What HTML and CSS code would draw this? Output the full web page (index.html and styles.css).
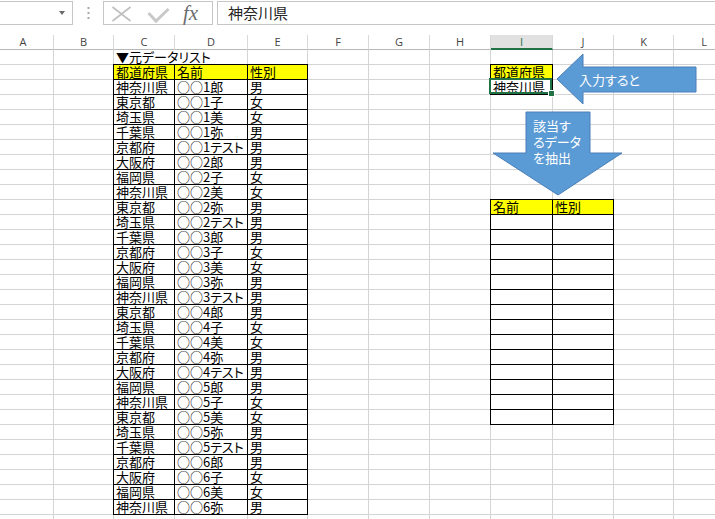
FILE: index.html
```html
<!DOCTYPE html>
<html lang="ja">
<head>
<meta charset="utf-8">
<title>元データリスト</title>
<link rel="stylesheet" href="styles.css">
</head>
<body>
<header class="fbar">
  <div class="namebox"><span class="caret"></span></div>
  <div class="grip">
    <svg width="3" height="12" viewBox="0 0 3 12"><rect x="0.5" y="0" width="2" height="2" fill="#a8a8a8"/><rect x="0.5" y="5" width="2" height="2" fill="#a8a8a8"/><rect x="0.5" y="10" width="2" height="2" fill="#a8a8a8"/></svg>
  </div>
  <div class="fbtns">
    <svg class="ico-x" width="21" height="22" viewBox="0 0 21 22"><path d="M1.5 5 L19.5 19 M19.5 5 L1.5 19" stroke="#bfbfbf" stroke-width="1.6" fill="none"/></svg>
    <svg class="ico-ok" width="23" height="22" viewBox="0 0 23 22"><path d="M1.5 11 L9 19 L21.5 7" stroke="#c9c9c9" stroke-width="3" fill="none"/></svg>
    <span class="fx">fx</span>
  </div>
  <div class="finput">神奈川県</div>
</header>

<nav class="colhead">
  <span>A</span><span>B</span><span>C</span><span>D</span><span>E</span><span>F</span><span>G</span><span>H</span><span class="on">I</span><span>J</span><span>K</span><span>L</span>
</nav>

<main class="sheet">
  <div class="title">▼元データリスト</div>
  <div class="list">
    <span class="hd">都道府県</span><span class="hd">名前</span><span class="hd">性別</span>
    <span>神奈川県</span><span>○○1郎</span><span>男</span>
    <span>東京都</span><span>○○1子</span><span>女</span>
    <span>埼玉県</span><span>○○1美</span><span>女</span>
    <span>千葉県</span><span>○○1弥</span><span>男</span>
    <span>京都府</span><span>○○1テスト</span><span>男</span>
    <span>大阪府</span><span>○○2郎</span><span>男</span>
    <span>福岡県</span><span>○○2子</span><span>女</span>
    <span>神奈川県</span><span>○○2美</span><span>女</span>
    <span>東京都</span><span>○○2弥</span><span>男</span>
    <span>埼玉県</span><span>○○2テスト</span><span>男</span>
    <span>千葉県</span><span>○○3郎</span><span>男</span>
    <span>京都府</span><span>○○3子</span><span>女</span>
    <span>大阪府</span><span>○○3美</span><span>女</span>
    <span>福岡県</span><span>○○3弥</span><span>男</span>
    <span>神奈川県</span><span>○○3テスト</span><span>男</span>
    <span>東京都</span><span>○○4郎</span><span>男</span>
    <span>埼玉県</span><span>○○4子</span><span>女</span>
    <span>千葉県</span><span>○○4美</span><span>女</span>
    <span>京都府</span><span>○○4弥</span><span>男</span>
    <span>大阪府</span><span>○○4テスト</span><span>男</span>
    <span>福岡県</span><span>○○5郎</span><span>男</span>
    <span>神奈川県</span><span>○○5子</span><span>女</span>
    <span>東京都</span><span>○○5美</span><span>女</span>
    <span>埼玉県</span><span>○○5弥</span><span>男</span>
    <span>千葉県</span><span>○○5テスト</span><span>男</span>
    <span>京都府</span><span>○○6郎</span><span>男</span>
    <span>大阪府</span><span>○○6子</span><span>女</span>
    <span>福岡県</span><span>○○6美</span><span>女</span>
    <span>神奈川県</span><span>○○6弥</span><span>男</span>
  </div>

  <div class="key">
    <span class="hd">都道府県</span>
    <span class="sel">神奈川県</span>
  </div>

  <div class="result">
    <span class="hd">名前</span><span class="hd">性別</span>
    <span></span><span></span>
    <span></span><span></span>
    <span></span><span></span>
    <span></span><span></span>
    <span></span><span></span>
    <span></span><span></span>
    <span></span><span></span>
    <span></span><span></span>
    <span></span><span></span>
    <span></span><span></span>
    <span></span><span></span>
    <span></span><span></span>
    <span></span><span></span>
    <span></span><span></span>
  </div>
</main>

<svg class="shapes" width="715" height="519" viewBox="0 0 715 519">
  <polygon class="arrow" points="557,79 583,54 583,67 696,67 696,92 583,92 583,104"/>
  <polygon class="arrow" points="526,112 590,112 590,153 622,153 558,195 493,153 526,153"/>
  <text class="atext" x="579" y="79">入力すると</text>
  <text class="atext" x="533" y="125">該当す</text>
  <text class="atext" x="533" y="141">るデータ</text>
  <text class="atext" x="533" y="157">を抽出</text>
</svg>
</body>
</html>
```
FILE: styles.css
```css
* { box-sizing: border-box; }
html, body { margin: 0; padding: 0; }
body {
  width: 715px;
  height: 519px;
  overflow: hidden;
  background: #fff;
  color: #000;
  font-family: "Noto Sans CJK JP", "Noto Sans", sans-serif;
}

/* formula bar */
.fbar {
  display: flex;
  height: 24px;
  margin-top: 1px;
}
.namebox {
  width: 73px;
  border: 1px solid #c6c6c6;
  border-left: 0;
  display: flex;
  align-items: center;
  justify-content: flex-end;
  padding-right: 7px;
}
.caret {
  width: 0;
  height: 0;
  border-left: 3.5px solid transparent;
  border-right: 3.5px solid transparent;
  border-top: 4px solid #6a6a6a;
}
.grip {
  width: 30px;
  display: flex;
  align-items: center;
  justify-content: center;
}
.fbtns {
  width: 110px;
  border: 1px solid #c6c6c6;
  display: flex;
  align-items: center;
}
.ico-x { margin-left: 7px; }
.ico-ok { margin-left: 15px; }
.fx {
  margin-left: 13px;
  font-family: "Liberation Serif", serif;
  font-style: italic;
  font-size: 21px;
  line-height: 22px;
  color: #6d6d6d;
}
.finput {
  flex: 1;
  margin-left: 4px;
  border: 1px solid #c6c6c6;
  border-right: 0;
  padding-left: 10px;
  font-size: 15px;
  line-height: 21px;
  color: #262626;
}

/* column headers */
.colhead {
  display: grid;
  grid-template-columns: 61px 60px 61px 73px 60px 61px 61px 61px 62px 61px 60px 61px;
  height: 14px;
  margin: 10px 0 0 -7px;
}
.colhead span {
  border-right: 1px solid #d9d9d9;
  border-bottom: 1px solid #b8b8b8;
  font-family: "Open Sans", "Liberation Sans", sans-serif;
  font-size: 11px;
  line-height: 13px;
  color: #444;
  text-align: center;
}
.colhead .on {
  background: #e1e1e1;
  border-bottom: 2px solid #217346;
  color: #217346;
}

/* sheet */
.sheet {
  display: grid;
  grid-template-columns: 61px 60px 61px 73px 60px 61px 61px 61px 62px 61px 60px 61px;
  grid-template-rows: repeat(32, 15px);
  margin: 1px 0 0 -7px;
  background:
    linear-gradient(#d4d4d4, #d4d4d4) 60px 0 / 1px 100% no-repeat,
    linear-gradient(#d4d4d4, #d4d4d4) 120px 0 / 1px 100% no-repeat,
    linear-gradient(#d4d4d4, #d4d4d4) 181px 0 / 1px 100% no-repeat,
    linear-gradient(#d4d4d4, #d4d4d4) 254px 0 / 1px 100% no-repeat,
    linear-gradient(#d4d4d4, #d4d4d4) 314px 0 / 1px 100% no-repeat,
    linear-gradient(#d4d4d4, #d4d4d4) 375px 0 / 1px 100% no-repeat,
    linear-gradient(#d4d4d4, #d4d4d4) 436px 0 / 1px 100% no-repeat,
    linear-gradient(#d4d4d4, #d4d4d4) 497px 0 / 1px 100% no-repeat,
    linear-gradient(#d4d4d4, #d4d4d4) 559px 0 / 1px 100% no-repeat,
    linear-gradient(#d4d4d4, #d4d4d4) 620px 0 / 1px 100% no-repeat,
    linear-gradient(#d4d4d4, #d4d4d4) 680px 0 / 1px 100% no-repeat,
    repeating-linear-gradient(to bottom, transparent 0, transparent 14px, #d4d4d4 14px, #d4d4d4 15px);
}

.title {
  grid-column: 3 / span 2;
  grid-row: 1;
  background: #fff;
  border-right: 1px solid #d4d4d4;
  border-bottom: 1px solid #d4d4d4;
  padding-left: 2px;
  font-size: 13px;
  line-height: 14px;
  white-space: nowrap;
  font-feature-settings: "palt";
}

.list, .key, .result {
  display: grid;
  grid-auto-rows: 15px;
  background: #fff;
  box-shadow: -1px 0 0 #000, 0 -1px 0 #000, -1px -1px 0 #000;
}
.list {
  grid-column: 3 / span 3;
  grid-row: 2 / span 30;
  grid-template-columns: 61px 73px 60px;
}
.key {
  grid-column: 9;
  grid-row: 2 / span 2;
  grid-template-columns: 62px;
}
.result {
  grid-column: 9 / span 2;
  grid-row: 11 / span 15;
  grid-template-columns: 62px 61px;
}
.list span, .key span, .result span {
  border-right: 1px solid #000;
  border-bottom: 1px solid #000;
  padding-left: 2px;
  font-size: 13px;
  line-height: 14px;
  white-space: nowrap;
  font-feature-settings: "palt";
}
.list .hd, .key .hd, .result .hd { background: #ff0; }

.key .sel { position: relative; }
.sel::after {
  content: "";
  position: absolute;
  top: -2px;
  left: -2px;
  right: 0;
  bottom: 0;
  border: 2px solid #217346;
}
.sel::before {
  content: "";
  position: absolute;
  right: -2px;
  bottom: -2px;
  width: 5px;
  height: 5px;
  background: #217346;
  box-shadow: 0 0 0 1px #fff;
  z-index: 1;
}

/* floating shapes */
.shapes {
  position: absolute;
  left: 0;
  top: 0;
  pointer-events: none;
}
.arrow {
  fill: #5b9bd5;
  stroke: #4a7fb8;
  stroke-width: 1;
}
.atext {
  fill: #fff;
  font-family: "Noto Sans CJK JP", "Noto Sans", sans-serif;
  font-size: 13px;
  dominant-baseline: central;
  font-feature-settings: "palt";
}
```
